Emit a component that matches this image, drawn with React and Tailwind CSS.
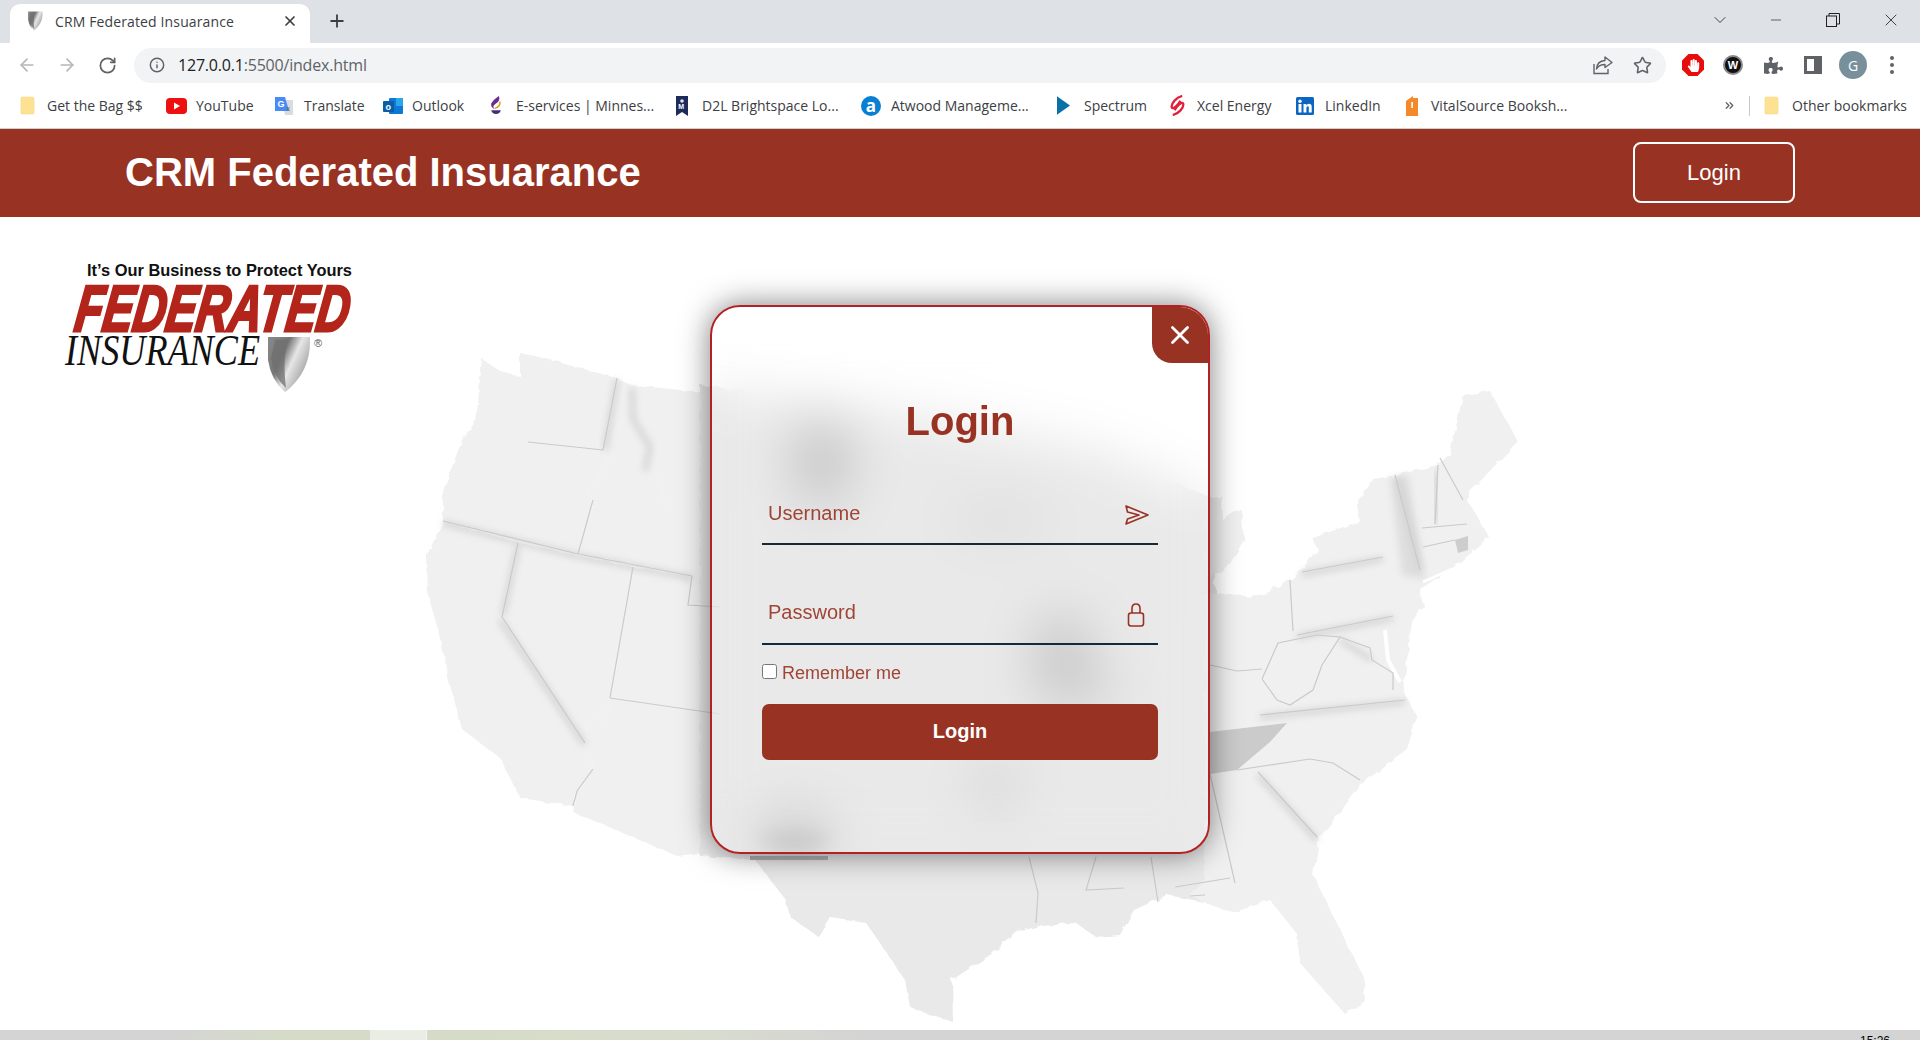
import React from "react";
import { ArrowLeft, ArrowRight, RotateCw, Info, Star, X, Plus, Minus, ChevronDown, ChevronsRight } from "lucide-react";
import { FaPuzzlePiece, FaHandPaper } from "react-icons/fa";

const Shield = ({ className }) => (
  <svg viewBox="0 0 46 57" className={className}>
    <defs>
      <linearGradient id="sh1" x1="0" y1="0" x2="1" y2="0.6">
        <stop offset="0" stopColor="#8a8a8a" />
        <stop offset="0.4" stopColor="#777" />
        <stop offset="0.62" stopColor="#e6e6e6" />
        <stop offset="1" stopColor="#9a9a9a" />
      </linearGradient>
    </defs>
    <path d="M3 1 L45 1 Q46 26 33 43 Q26 52 20 56 Q6 44 3 24 Z" fill="url(#sh1)" />
    <path d="M10 4 L24 3 Q17 20 21 52 Q8 40 6 22 Z" fill="#6f6f6f" opacity="0.75" />
  </svg>
);

const Folder = () => (
  <svg viewBox="0 0 16 20" className="w-[15px] h-[19px]">
    <path d="M1 2 Q1 1 2 1 H13 Q15 1 15 3 V18 Q15 19 14 19 H2 Q1 19 1 18 Z" fill="#fde293" stroke="#f5d77e" strokeWidth="0.6" />
  </svg>
);
const YouTube = () => (
  <svg viewBox="0 0 21 16" className="w-[21px] h-[16px]">
    <rect width="21" height="16" rx="4" fill="#ee0f0f" />
    <path d="M8 4.5 L14 8 L8 11.5 Z" fill="#fff" />
  </svg>
);
const Translate = () => (
  <svg viewBox="0 0 20 20" className="w-[20px] h-[20px]">
    <path d="M8 4 L19 4 L19 19 L11 19 Z" fill="#dadce0" />
    <path d="M1 1 H11 L15 15 H1 Z" fill="#4a8af4" />
    <text x="3.5" y="11" fontSize="9" fontWeight="700" fill="#fff" fontFamily="Liberation Sans">G</text>
    <text x="12.5" y="15" fontSize="7" fill="#5f6368" fontFamily="Liberation Sans">x</text>
  </svg>
);
const Outlook = () => (
  <svg viewBox="0 0 20 20" className="w-[20px] h-[20px]">
    <rect x="6" y="2" width="14" height="16" rx="1" fill="#0f78d4" />
    <rect x="13" y="2" width="7" height="8" fill="#28a8ea" />
    <rect x="0" y="5" width="11" height="11" rx="1" fill="#0a5ea8" />
    <text x="2.5" y="14" fontSize="9" fontWeight="700" fill="#fff" fontFamily="Liberation Sans">o</text>
  </svg>
);
const EServices = () => (
  <svg viewBox="0 0 16 22" className="w-[16px] h-[21px]">
    <path d="M11 1 Q13 6 8 9 Q3 12 7 15 Q2 13 3 9 Q5 5 11 1 Z" fill="#6b2c91" />
    <path d="M12 7 Q13 12 7 14" stroke="#d9a21b" strokeWidth="1.6" fill="none" />
    <path d="M3 16 H13 Q12 20 8 20 Q4 20 3 16 Z" fill="#4b2a7b" />
  </svg>
);
const D2L = () => (
  <svg viewBox="0 0 12 20" className="w-[12px] h-[20px]">
    <path d="M0 0 H12 V20 L6 16 L0 20 Z" fill="#1c2b5a" />
    <circle cx="6" cy="5" r="1.8" fill="#dfe3ee" />
    <text x="2.2" y="13" fontSize="7" fontWeight="700" fill="#fff" fontFamily="Liberation Sans">M</text>
  </svg>
);
const Atwood = () => (
  <svg viewBox="0 0 20 20" className="w-[20px] h-[20px]">
    <circle cx="10" cy="10" r="10" fill="#0a7fd1" />
    <text x="10" y="15.5" textAnchor="middle" fontSize="17" fontWeight="700" fill="#fff" fontFamily="Open Sans">a</text>
  </svg>
);
const Spectrum = () => (
  <svg viewBox="0 0 14 20" className="w-[13px] h-[19px]">
    <path d="M0 0 L14 10 L0 20 Z" fill="#0b6fa8" />
  </svg>
);
const Xcel = () => (
  <svg viewBox="0 0 20 22" className="w-[19px] h-[21px]">
    <path d="M15 1 C9 2 3 9 4 13 C5 16 11 10 13 6" stroke="#e3203a" strokeWidth="2.4" fill="none" />
    <path d="M5 21 C11 20 17 13 16 9 C15 6 9 12 7 16" stroke="#e3203a" strokeWidth="2.4" fill="none" />
  </svg>
);
const LinkedIn = () => (
  <svg viewBox="0 0 18 18" className="w-[18px] h-[18px]">
    <rect width="18" height="18" rx="1.5" fill="#0a66c2" />
    <rect x="2.5" y="7" width="3" height="8.5" fill="#fff" />
    <circle cx="4" cy="4.3" r="1.7" fill="#fff" />
    <path d="M7.5 7 H10.3 V8.3 Q11.2 6.8 13 6.8 Q15.7 6.8 15.7 10 V15.5 H12.8 V10.6 Q12.8 9.2 11.7 9.2 Q10.4 9.2 10.4 10.7 V15.5 H7.5 Z" fill="#fff" />
  </svg>
);
const Vital = () => (
  <svg viewBox="0 0 14 20" className="w-[14px] h-[20px]">
    <path d="M1 5 L8 0 L8 2 H13 V20 H1 Z" fill="#f5892a" />
    <rect x="6.3" y="6" width="1.6" height="6" fill="#fff" />
  </svg>
);

const bookmarks = [
  { t: "Get the Bag $$", I: Folder, w: "w-[146px]", b: "w-[27px]", s: "w-[98px]" },
  { t: "YouTube", I: YouTube, w: "w-[108px]", b: "w-[30px]", s: "w-[60px]" },
  { t: "Translate", I: Translate, w: "w-[109px]", b: "w-[30px]", s: "w-[60px]" },
  { t: "Outlook", I: Outlook, w: "w-[105px]", b: "w-[29px]", s: "w-[56px]" },
  { t: "E-services | Minnes...", I: EServices, w: "w-[188px]", b: "w-[28px]", s: "w-[140px]" },
  { t: "D2L Brightspace Lo...", I: D2L, w: "w-[185px]", b: "w-[26px]", s: "w-[142px]" },
  { t: "Atwood Manageme...", I: Atwood, w: "w-[196px]", b: "w-[30px]", s: "w-[145px]" },
  { t: "Spectrum", I: Spectrum, w: "w-[111px]", b: "w-[27px]", s: "w-[66px]" },
  { t: "Xcel Energy", I: Xcel, w: "w-[128px]", b: "w-[29px]", s: "w-[80px]" },
  { t: "LinkedIn", I: LinkedIn, w: "w-[109px]", b: "w-[29px]", s: "w-[58px]" },
  { t: "VitalSource Booksh...", I: Vital, w: "w-[165px]", b: "w-[26px]", s: "w-[139px]" },
];

const states = [
  "482,359 500,371 520,376 520,352 617,378 603,456 528,450 503,446 486,428 476,424",
  "480,415 497,436 528,443 600,450 608,460 588,491 593,500 578,554 443,521 443,491 462,440",
  "617,378 632,385 633,419 650,447 645,471 657,476 667,509 702,509 692,576 578,554 593,500 588,491 608,460 600,450",
  "632,385 720,394 720,500 702,509 667,509 657,476 645,471 650,447 633,419",
  "702,500 720,500 720,607 688,605 692,576",
  "518,543 633,567 610,698 603,722 590,719 585,743 502,617",
  "443,521 518,543 502,617 585,743 593,769 577,791 573,806 520,798 500,758 462,729 447,674 442,643 428,595 427,555",
  "633,567 692,576 688,605 720,607 720,714 610,698",
  "610,698 720,714 720,853 700,853 677,856 573,812 577,791 593,769 585,743 590,719 603,722",
  "700,385 900,410 1000,430 1100,450 1215,500 1215,900 1230,907 1167,895 1134,910 1120,935 1096,937 1076,923 1038,925 1020,930 993,953 952,980 953,1022 910,1007 905,980 878,940 866,923 831,918 819,937 790,917 786,900 755,860 700,856",
  "1205,592 1230,593 1250,597 1267,593 1290,580 1302,570 1317,549 1313,538 1360,521 1357,505 1373,479 1397,475 1437,465 1450,454 1463,395 1490,391 1518,441 1470,492 1467,500 1490,538 1450,570 1420,589 1423,606 1412,622 1403,690 1417,717 1407,749 1367,778 1320,837 1313,875 1363,976 1365,1001 1345,1014 1300,963 1297,934 1270,900 1233,913 1190,896 1205,880",
  "1205,500 1222,496 1223,520 1241,508 1244,540 1225,572 1205,575",
];

const seams = [
  "617,378 603,450", "528,442 603,450", "578,554 593,500", "443,521 578,554", "578,554 692,576", "518,543 502,617 585,743",
  "692,576 688,605 720,607", "610,698 720,714", "633,567 610,698", "593,769 577,791 573,806",
  "1302,572 1383,557", "1297,635 1393,616", "1260,715 1405,700", "1258,772 1317,837", "1235,883 1300,883",
  "1237,770 1310,759 1333,763 1360,780", "1438,465 1435,524", "1210,593 1240,593", "1290,580 1293,631",
  "1210,665 1237,671 1262,669", "1262,679 1278,643 1317,635 1340,637 1322,665 1313,690 1290,705 1277,700 1262,679",
  "1340,637 1370,648 1372,660 1393,673 1393,690", "1210,774 1235,883",
  "1029,857 1038,893 1036,923", "1096,857 1086,890 1124,888", "1151,857 1158,902", "1175,887 1230,878", "1190,896 1205,895",
  "1395,475 1420,570", "1422,528 1467,524", "1423,547 1455,540", "1440,458 1463,500",
];

const softShades = [
  "617,380 605,450", "632,388 633,419 650,447 645,471", "500,620 585,745", "518,545 503,615",
  "443,523 578,556", "578,556 692,578", "1398,478 1420,570", "1302,574 1383,559", "1297,637 1393,618", "1260,717 1405,702",
  "1437,470 1435,523", "1258,775 1317,840", "1235,880 1300,880", "1340,640 1372,660",
];

const USMap = () => (
  <svg viewBox="0 217 1920 813" className="absolute inset-0 w-[1920px] h-[813px] z-0">
    <defs>
      <filter id="soft" x="-50%" y="-50%" width="200%" height="200%">
        <feGaussianBlur stdDeviation="3.5" />
      </filter>
      <filter id="big" x="-100%" y="-100%" width="300%" height="300%">
        <feGaussianBlur stdDeviation="9" />
      </filter>
      <filter id="tiny" x="-20%" y="-20%" width="140%" height="140%">
        <feGaussianBlur stdDeviation="0.5" />
      </filter>
      <filter id="rough" x="-5%" y="-5%" width="110%" height="110%">
        <feTurbulence type="fractalNoise" baseFrequency="0.09" numOctaves="2" seed="4" result="n" />
        <feDisplacementMap in="SourceGraphic" in2="n" scale="6" />
      </filter>
    </defs>
    <g filter="url(#rough)">
      {states.map((p, i) => (
        <polygon key={i} points={p} fill={i === 9 ? "#e9e9e9" : "#f0f0f0"} />
      ))}
    </g>
    <polygon points="1210,732 1287,723 1270,742 1237,770 1210,774" fill="#cbcbcb" filter="url(#tiny)" />
    <polygon points="1390,478 1408,475 1425,580 1402,575" fill="#dedede" filter="url(#soft)" />
    <polygon points="1455,540 1468,536 1468,550 1458,553" fill="#cdcdcd" />
    <polyline points="1385,630 1388,660 1400,682" fill="none" stroke="#ffffff" strokeWidth="4" />
    <polyline points="1423,582 1450,570" fill="none" stroke="#ffffff" strokeWidth="3" />
    {softShades.map((p, i) => (
      <polyline key={i} points={p} fill="none" stroke="#d0d0d0" strokeWidth="5" filter="url(#soft)" />
    ))}
    {seams.map((p, i) => (
      <polyline key={i} points={p} fill="none" stroke="#cacaca" strokeWidth="1.2" filter="url(#tiny)" />
    ))}
    <g filter="url(#big)">
      <ellipse cx="822" cy="462" rx="24" ry="44" fill="#bcbcbc" />
      <ellipse cx="1062" cy="650" rx="26" ry="34" fill="#c0c0c0" />
      <ellipse cx="1075" cy="690" rx="40" ry="14" fill="#c4c4c4" />
      <ellipse cx="795" cy="835" rx="36" ry="14" fill="#b4b4b4" />
      <ellipse cx="995" cy="785" rx="20" ry="30" fill="#d4d4d4" />
      <ellipse cx="1000" cy="520" rx="50" ry="10" fill="#d4d4d4" />
    </g>
    <rect x="750" y="856" width="78" height="4" fill="#b0b0b0" filter="url(#tiny)" />
  </svg>
);

const Logo = () => (
  <svg viewBox="0 0 300 150" className="w-[300px] h-[150px] overflow-visible">
    <text x="27" y="21" fontFamily="Liberation Sans" fontWeight="700" fontSize="17" textLength="265" lengthAdjust="spacingAndGlyphs" fill="#111">It’s Our Business to Protect Yours</text>
    <g transform="translate(0,76) skewX(-8)">
      <text x="13" y="0" fontFamily="Liberation Sans" fontWeight="700" fontStyle="italic" fontSize="65" textLength="274" lengthAdjust="spacingAndGlyphs" fill="#b3251b" stroke="#b3251b" strokeWidth="3">FEDERATED</text>
    </g>
    <text x="5" y="110" fontFamily="Liberation Serif" fontStyle="italic" fontSize="44" textLength="195" lengthAdjust="spacingAndGlyphs" fill="#111">INSURANCE</text>
    <foreignObject x="205" y="81" width="46" height="57"><Shield className="w-[46px] h-[57px]" /></foreignObject>
    <text x="254" y="92" fontFamily="Liberation Sans" fontSize="11" fill="#555">®</text>
  </svg>
);

const Send = () => (
  <svg viewBox="0 0 24 20" className="w-[24px] h-[20px]" fill="none" stroke="#983223" strokeWidth="1.6" strokeLinejoin="round">
    <path d="M1 1 L23 10 L1 19 L2.5 14 L14 10 L2.5 7 Z" />
  </svg>
);
const Lock = () => (
  <svg viewBox="0 0 18 24" className="w-[18px] h-[24px]" fill="none" stroke="#983223" strokeWidth="1.6">
    <rect x="1.5" y="10" width="15" height="13" rx="2.5" />
    <path d="M5 10 V5.5 Q5 1 9 1 Q13 1 13 5.5 V10" />
  </svg>
);

export default function App() {
  return (
    <div className="w-[1920px] h-[1040px] overflow-hidden flex flex-col bg-white font-['Liberation_Sans',sans-serif]">
      {/* Tab strip */}
      <div className="h-[43px] bg-[#dee1e6] flex items-end shrink-0 pl-[10px]">
        <div className="w-[300px] h-[39px] bg-white rounded-t-[10px] flex items-center pl-[17px] pr-[12px] pb-[5px] font-['Open_Sans',sans-serif] text-[14px] text-[#3c4043]">
          <Shield className="w-[16px] h-[20px]" />
          <span className="ml-[12px] flex-1 whitespace-nowrap tracking-[0.13px]">CRM Federated Insuarance</span>
          <X size={16} strokeWidth={2.6} className="text-[#3c4043]" />
        </div>
        <div className="h-[39px] flex items-center ml-[17px] pb-[5px]">
          <Plus size={20} strokeWidth={2.2} className="text-[#3c4043]" />
        </div>
        <div className="flex-1 flex items-center justify-end h-[39px] -translate-y-[4px] text-[#202124]">
          <ChevronDown size={20} strokeWidth={1} className="mr-[38px]" />
          <Minus size={16} strokeWidth={1} className="mr-[42px]" />
          <svg viewBox="0 0 14 14" className="w-[14px] h-[14px] mr-[41px]" fill="none" stroke="#202124" strokeWidth="1">
            <rect x="0.5" y="3" width="10" height="10.5" />
            <path d="M3 3 V0.5 H13.5 V11 H10.5" />
          </svg>
          <X size={20} strokeWidth={1} className="mr-[19px]" />
        </div>
      </div>
      {/* Toolbar */}
      <div className="h-[44px] bg-white flex items-center shrink-0 pl-[17px]">
        <ArrowLeft size={20} strokeWidth={2} className="text-[#b4b6b9]" />
        <ArrowRight size={20} strokeWidth={2} className="text-[#b4b6b9] ml-[20px]" />
        <RotateCw size={19} strokeWidth={2.2} className="text-[#5f6368] ml-[21px]" />
        <div className="w-[1532px] h-[35px] ml-[17px] rounded-full bg-[#f1f3f4] flex items-center pl-[15px] pr-[14px]">
          <Info size={16} strokeWidth={2.2} className="text-[#5f6368]" />
          <span className="ml-[13px] flex-1 font-['Open_Sans',sans-serif] text-[16px] tracking-[-0.2px] text-[#5f6368]">
            <span className="text-[#202124]">127.0.0.1</span>:5500/index.html
          </span>
          <svg viewBox="0 0 20 20" className="w-[20px] h-[20px]" fill="none" stroke="#5f6368" strokeWidth="1.4">
            <path d="M1 9 V18.5 H15 V14" />
            <path d="M12 2 L19 7.5 L12 12.5 V9.5 Q6 9.5 3.5 14 Q4 6 12 5.5 Z" strokeLinejoin="round" />
          </svg>
          <Star size={19} strokeWidth={2} className="text-[#5f6368] ml-[20px]" />
        </div>
        <div className="relative w-[22px] h-[22px] ml-[16px] flex items-center justify-center">
          <svg viewBox="0 0 22 22" className="absolute inset-0 w-[22px] h-[22px]">
            <polygon points="6.5,0 15.5,0 22,6.5 22,15.5 15.5,22 6.5,22 0,15.5 0,6.5" fill="#e60d0d" />
          </svg>
          <FaHandPaper size={13} className="relative text-white" />
        </div>
        <div className="w-[20px] h-[20px] ml-[19px] rounded-full bg-[#111] border-2 border-[#888] flex items-center justify-center text-white text-[11px] font-bold">W</div>
        <FaPuzzlePiece size={19} className="text-[#5f6368] ml-[21px]" />
        <div className="w-[18px] h-[18px] ml-[21px] bg-[#5f6368] p-[3px] pr-[8px] flex">
          <div className="flex-1 bg-white" />
        </div>
        <div className="w-[28px] h-[28px] ml-[17px] rounded-full bg-[#78909c] flex items-center justify-center text-white text-[14px] font-['Open_Sans',sans-serif]">G</div>
        <div className="ml-[23px] flex flex-col gap-[3px]">
          <div className="w-[4px] h-[4px] rounded-full bg-[#5f6368]" />
          <div className="w-[4px] h-[4px] rounded-full bg-[#5f6368]" />
          <div className="w-[4px] h-[4px] rounded-full bg-[#5f6368]" />
        </div>
      </div>
      {/* Bookmarks */}
      <div className="h-[42px] bg-white border-b border-[#cfcfcf] flex items-center shrink-0 pl-[20px] pb-[4px] font-['Open_Sans',sans-serif] text-[14px] text-[#3c4043]">
        {bookmarks.map((b) => (
          <div key={b.t} className={"flex items-center shrink-0 " + b.w}>
            <div className={"shrink-0 flex items-center " + b.b}><b.I /></div>
            <span className={"whitespace-nowrap " + b.s}>{b.t}</span>
          </div>
        ))}
        <div className="ml-[153px] flex items-center">
          <ChevronsRight size={13} strokeWidth={2.4} className="text-[#5f6368]" />
          <div className="w-px h-[20px] bg-[#c8c8c8] ml-[13px]" />
          <div className="ml-[14px]"><Folder /></div>
          <span className="ml-[13px] whitespace-nowrap">Other bookmarks</span>
        </div>
      </div>
      {/* Header */}
      <header className="h-[88px] bg-[#983223] shrink-0 flex items-center justify-between pl-[125px] pr-[125px] pb-[2px]">
        <h1 className="text-[40px] font-bold text-white">CRM Federated Insuarance</h1>
        <button className="w-[162px] h-[61px] rounded-[8px] border-2 border-white text-white text-[22px]">Login</button>
      </header>
      {/* Main */}
      <main className="relative flex-1 grid grid-cols-[710px_500px_1fr] overflow-hidden">
        <USMap />
        <div className="relative z-10 pl-[60px] pt-[38px]">
          <Logo />
        </div>
        <div className="relative z-10 pt-[88px]">
          <div className="relative w-[500px] h-[549px] rounded-[30px] border-2 border-[#b22222] backdrop-blur-[26px] shadow-[0_0_30px_rgba(0,0,0,0.5)] overflow-hidden px-[50px]">
            <button className="absolute top-0 right-0 w-[56px] h-[56px] bg-[#983223] rounded-bl-[20px] flex items-center justify-center text-white">
              <X size={30} strokeWidth={2.2} />
            </button>
            <h2 className="text-[40px] font-bold text-[#983223] text-center mt-[91px] leading-[46px]">Login</h2>
            <div className="mt-[38px] h-[63px] border-b-2 border-[#162938] flex items-start justify-between pl-[6px] pr-[9px] pt-[20px] text-[20px] text-[#983223]">
              <span className="leading-[23px] opacity-90">Username</span>
              <div className="mt-[3px]"><Send /></div>
            </div>
            <div className="mt-[37px] h-[63px] border-b-2 border-[#162938] flex items-start justify-between pl-[6px] pr-[13px] pt-[19px] text-[20px] text-[#983223]">
              <span className="leading-[23px] opacity-90">Password</span>
              <div className="mt-[2px]"><Lock /></div>
            </div>
            <label className="mt-[17px] flex items-center text-[18px] leading-[22px] text-[#983223]">
              <input type="checkbox" className="w-[15px] h-[15px] m-0 -translate-y-[2px]" />
              <span className="ml-[5px] opacity-90">Remember me</span>
            </label>
            <button className="mt-[20px] w-full h-[56px] pb-[3px] rounded-[7px] bg-[#983223] text-white text-[20px] font-bold">Login</button>
          </div>
        </div>
      </main>
      {/* Desktop strip */}
      <div className="h-[10px] shrink-0 bg-[#d4d4d4] flex overflow-hidden relative">
        <div className="w-[280px] bg-[linear-gradient(90deg,#d4d4d4_60%,#d5dbc8)]" />
        <div className="w-[90px] bg-[#d5dbc8]" />
        <div className="w-[57px] bg-[#e9ede4] border-r border-[#f4f4f4]" />
        <div className="w-[440px] bg-[linear-gradient(90deg,#d5dbc8,#d8dccd_60%,#d4d4d4)]" />
        <div className="flex-1 flex justify-end pr-[30px]">
          <span className="text-[12px] leading-[12px] mt-[5px] text-black">15:26</span>
        </div>
      </div>
    </div>
  );
}
